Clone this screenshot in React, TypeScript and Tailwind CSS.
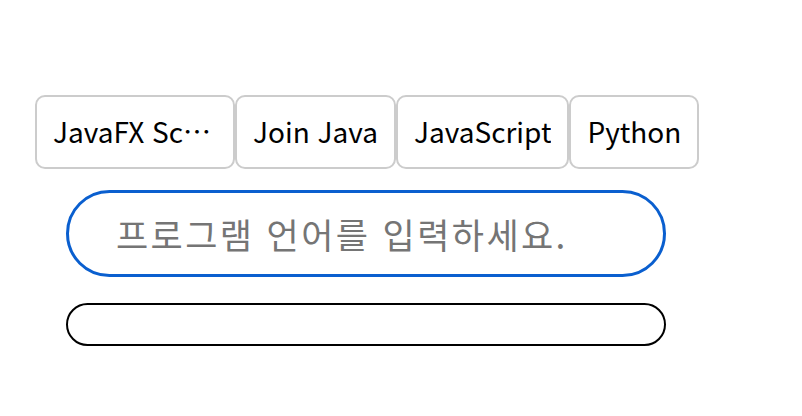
import { memo } from "react";

const tags = ["JavaFX Script", "Join Java", "JavaScript", "Python"];

const App = () => {
  return (
    <div className="w-[802px] h-[416px] bg-white font-['Noto_Sans_CJK_KR','Noto_Sans',sans-serif]" lang="ko">
      {/* tags */}
      <div className="pt-[95px] pl-[35px] flex">
        {tags.map((t) => (
          <div
            key={t}
            className="h-[74px] px-[16px] flex items-center border-2 border-[#cccccc] rounded-[10px] text-[28px] text-black"
          >
            <span className="max-w-[164px] truncate leading-[1.4]">{t}</span>
          </div>
        ))}
      </div>
      {/* input */}
      <div className="pl-[66px] pt-[21px]">
        <input
          type="text"
          placeholder="프로그램 언어를 입력하세요."
          className="w-[600px] h-[87px] px-[47px] border-[3px] border-[#0a5fcf] rounded-full outline-none text-[35px] tracking-[2.4px] placeholder:text-[#757575]"
        />
      </div>
      {/* list */}
      <div className="pl-[66px] pt-[26px]">
        <div className="w-[600px] h-[43px] border-2 border-black rounded-full" />
      </div>
    </div>
  );
};

export default memo(App);
